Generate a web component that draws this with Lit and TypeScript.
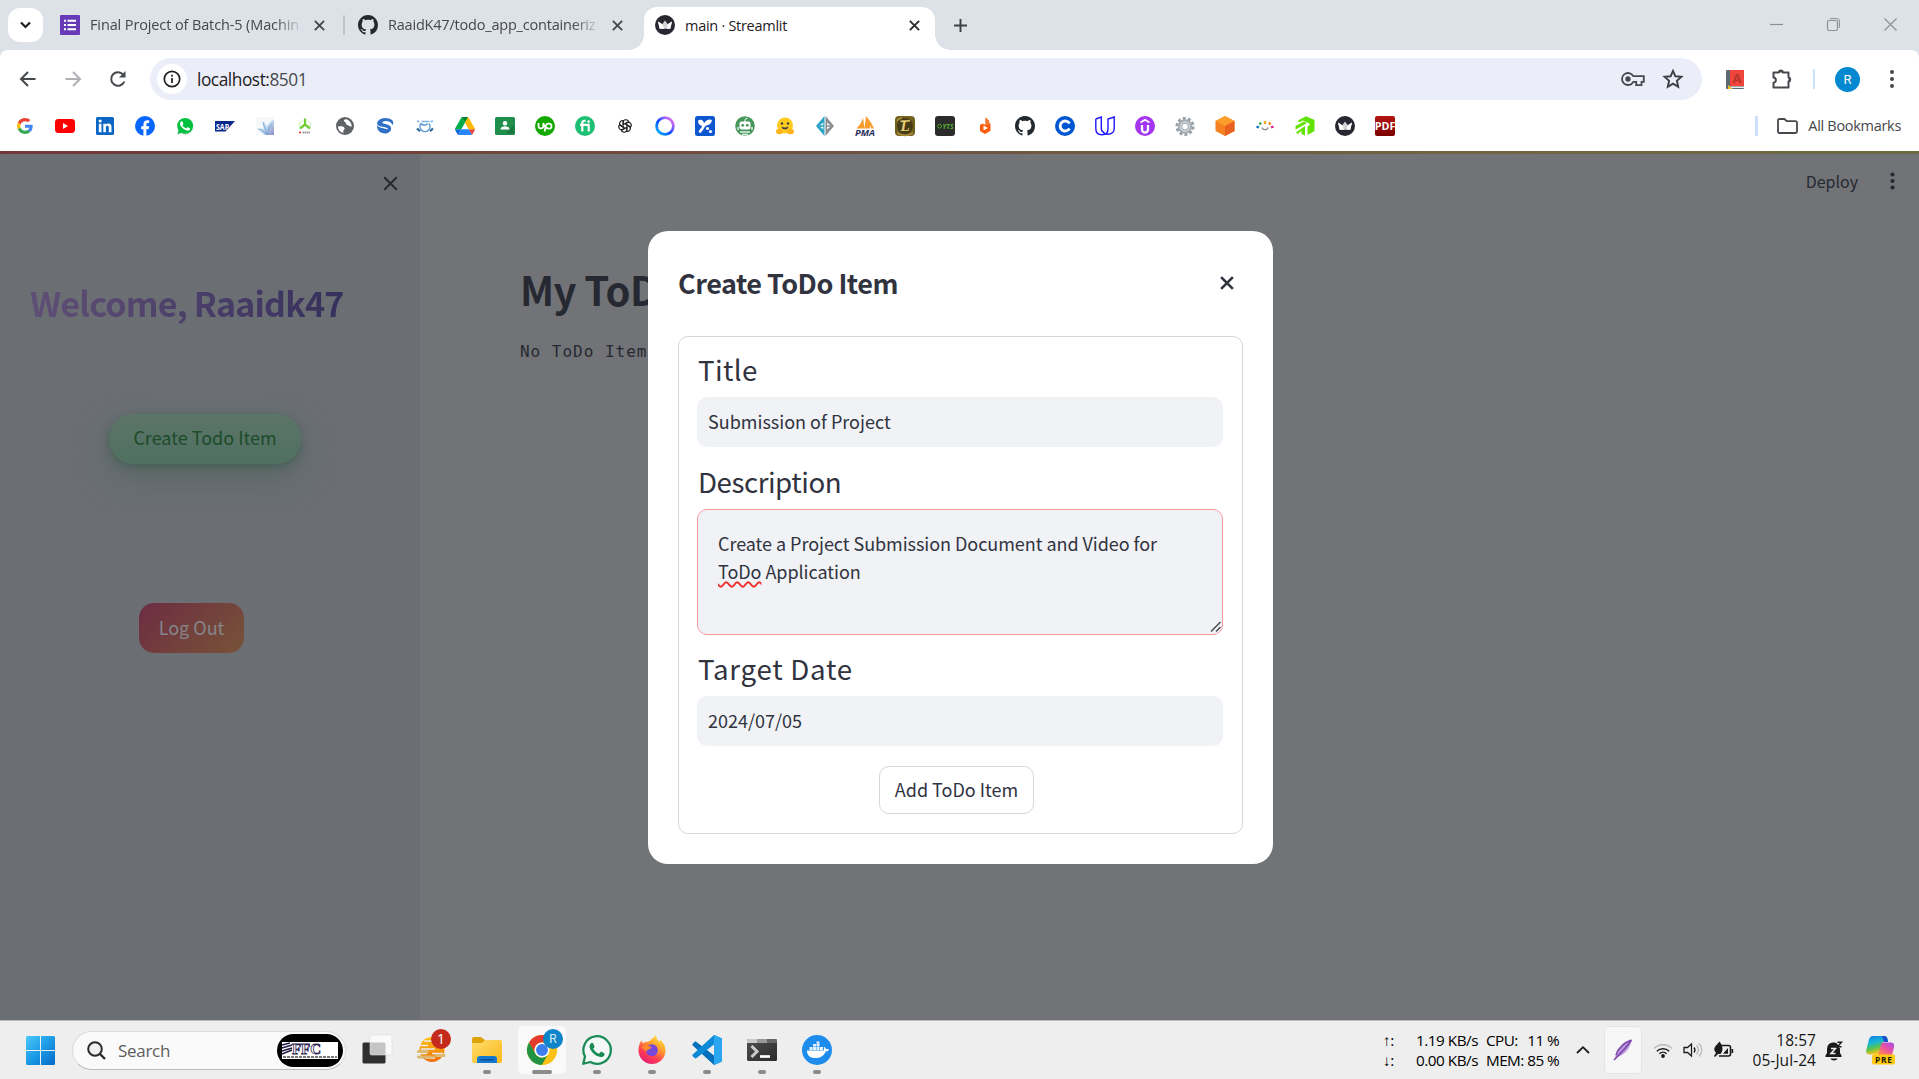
import { LitElement, html, css } from "lit";
import { customElement } from "lit/decorators.js";

const githubMark =
  "M8 0C3.58 0 0 3.58 0 8c0 3.54 2.29 6.53 5.47 7.59.4.07.55-.17.55-.38 0-.19-.01-.82-.01-1.49-2.01.37-2.53-.49-2.69-.94-.09-.23-.48-.94-.82-1.13-.28-.15-.68-.52-.01-.53.63-.01 1.08.58 1.23.82.72 1.21 1.87.87 2.33.66.07-.52.28-.87.51-1.07-1.78-.2-3.64-.89-3.64-3.95 0-.87.31-1.59.82-2.15-.08-.2-.36-1.02.08-2.12 0 0 .67-.21 2.2.82.64-.18 1.32-.27 2-.27.68 0 1.36.09 2 .27 1.53-1.04 2.2-.82 2.2-.82.44 1.1.16 1.92.08 2.12.51.56.82 1.27.82 2.15 0 3.07-1.87 3.75-3.65 3.95.29.25.54.73.54 1.48 0 1.07-.01 1.93-.01 2.2 0 .21.15.46.55.38A8.01 8.01 0 0 0 16 8c0-4.42-3.58-8-8-8z";

const whatsappPhone =
  "M17.472 14.382c-.297-.149-1.758-.867-2.03-.967-.273-.099-.471-.148-.67.15-.197.297-.767.966-.94 1.164-.173.199-.347.223-.644.075-.297-.15-1.255-.463-2.39-1.475-.883-.788-1.48-1.761-1.653-2.059-.173-.297-.018-.458.13-.606.134-.133.298-.347.446-.52.149-.174.198-.298.298-.497.099-.198.05-.371-.025-.52-.075-.149-.669-1.612-.916-2.207-.242-.579-.487-.5-.669-.51-.173-.008-.371-.01-.57-.01-.198 0-.52.074-.792.372-.272.297-1.04 1.016-1.04 2.479 0 1.462 1.065 2.875 1.213 3.074.149.198 2.096 3.2 5.077 4.487.709.306 1.262.489 1.694.625.712.227 1.36.195 1.871.118.571-.085 1.758-.719 2.006-1.413.248-.694.248-1.289.173-1.413-.074-.124-.272-.198-.57-.347z";

const github = html`<svg viewBox="0 0 16 16" width="20" height="20"><path fill="#24292f" d=${githubMark} /></svg>`;

const streamlit = html`<svg viewBox="0 0 20 20" width="20" height="20">
  <circle cx="10" cy="10" r="10" fill="#262730" />
  <path d="M3 6.600l4.300 2.700L10 5.600l2.700 3.700L17 6.600l-1.700 7.200H4.700z" fill="#d4d4d6" />
  <path d="M3 6.600l4.300 2.700 2 4.500H4.700zM17 6.600l-4.300 2.700-1 4.500h3.600z" fill="#fff" />
</svg>`;

const bookmarks = [
  html`<svg viewBox="-6 -6 60 60"><path fill="#ea4335" d="M24 9.5c3.54 0 6.71 1.22 9.21 3.6l6.85-6.85C35.9 2.38 30.47 0 24 0 14.62 0 6.51 5.38 2.56 13.22l7.98 6.19C12.43 13.72 17.74 9.5 24 9.5z"/><path fill="#4285f4" d="M46.98 24.55c0-1.57-.15-3.09-.38-4.55H24v9.02h12.94c-.58 2.96-2.26 5.48-4.78 7.18l7.73 6c4.51-4.18 7.09-10.36 7.09-17.65z"/><path fill="#fbbc05" d="M10.53 28.59c-.48-1.45-.76-2.99-.76-4.59s.27-3.14.76-4.59l-7.98-6.19C.92 16.46 0 20.12 0 24s.92 7.54 2.56 10.78l7.97-6.19z"/><path fill="#34a853" d="M24 48c6.48 0 11.93-2.13 15.89-5.81l-7.73-6c-2.15 1.45-4.92 2.3-8.16 2.3-6.26 0-11.57-4.22-13.47-9.91l-7.98 6.19C6.51 42.62 14.62 48 24 48z"/></svg>`,
  html`<svg viewBox="0 0 20 20"><rect y="3" width="20" height="14" rx="3.4" fill="#f00"/><path d="M8 7v6l5-3z" fill="#fff"/></svg>`,
  html`<svg viewBox="0 0 20 20"><rect x="1" y="1" width="18" height="18" rx="1.5" fill="#0a66c2"/><rect x="3.8" y="7.8" width="2.7" height="8.4" fill="#fff"/><circle cx="5.15" cy="5" r="1.6" fill="#fff"/><path d="M8.3 7.8h2.6V9c.5-.9 1.4-1.4 2.6-1.4 2.3 0 3 1.5 3 3.7v4.9h-2.7v-4.4c0-1.1-.2-2-1.4-2s-1.5.9-1.5 2v4.4H8.3z" fill="#fff"/></svg>`,
  html`<svg viewBox="0 0 20 20"><circle cx="10" cy="10" r="10" fill="#0866ff"/><path d="M8.4 20v-6.8H6.2v-3h2.2V8.6c0-3.1 1.5-4.4 4.2-4.4.6 0 1.2.1 1.6.2v2.7h-1.3c-1.1 0-1.5.5-1.5 1.6v1.5h2.8l-.5 3h-2.3V20z" fill="#fff"/></svg>`,
  html`<svg viewBox="0 0 24 24"><path d="M2 23l1.5-5.6A10 10 0 1 1 7.4 21.4z" fill="#e3e3e3"/><circle cx="12.2" cy="11.8" r="9.5" fill="#00c040"/><path d="M3 21.5l1.5-5 3.5 3.5z" fill="#00c040"/><path fill="#fff" d=${whatsappPhone}/></svg>`,
  html`<svg viewBox="0 0 20 20"><path d="M0 5h20l-9.500 10.500H0z" fill="#07298c"/><text class="logo" x="1" y="13.500" font-size="8.500" font-weight="700" fill="#fff" textLength="13" lengthAdjust="spacingAndGlyphs">SAP</text></svg>`,
  html`<svg viewBox="0 0 20 20"><defs><linearGradient id="wing" x1="0" y1="0" x2="1" y2="1"><stop offset="0" stop-color="#f4fafd"/><stop offset=".5" stop-color="#bcd8ee"/><stop offset="1" stop-color="#8d8cc8"/></linearGradient></defs><rect x="1" y="1" width="18" height="18" fill="#f5f9fc"/><path d="M19 4c-4 1-6 4-7 7-1-3-2-5-4-6-.5 3 0 5 1 8-2-1-4-1-7 0 3 1 5 4 8 6h9z" fill="url(#wing)"/><path d="M17 8c-3 3-4 6-4 11M8 6c1 4 2 8 5 13M3 13c4 1 6 3 10 6" stroke="#6fa3d2" stroke-width=".8" fill="none"/></svg>`,
  html`<svg viewBox="0 0 20 20"><path d="M10 2.500v6.500M10 8.500l-5 4M10 8.500l5 4" stroke="#6fce35" stroke-width="2.300" fill="none"/><path d="M7 4.500a6 6 0 0 0-2.500 6M13 4.500a6 6 0 0 1 2.500 6" stroke="#c5eab1" fill="none"/><circle cx="5" cy="16.500" r="1.100" fill="#e33"/><path d="M7.500 16.500h7.500" stroke="#999" stroke-width="2" stroke-dasharray="1.500 .5"/></svg>`,
  html`<svg viewBox="0 0 20 20"><circle cx="10" cy="10" r="9" fill="#5f6368"/><path d="M11.500 3.200c-2.500 0-3.500 1.800-1.800 2.600 2 .9.500 2.900 2.800 3.200 1.500 0 1.500 2 4.300 1.500-.2-3.500-2.300-6.300-5.300-7.300zM3 10.500c2.500-.5 6-.3 6.500 1.500s-1.300 1.800-1.300 3.300.6 1 .6 1.700A7 7 0 0 1 3 10.500z" fill="#fff"/></svg>`,
  html`<svg viewBox="0 0 20 20"><path d="M17.500 4.500C13 1 6 1.500 3.500 4.500S2 9.500 6 10.500s8 1 6.500 3c-3-1.500-8-1-10.500-4.500-.5 6 5 9.500 10 8.200 5-1.200 5.500-6.700 1.500-8.200S6.500 7.500 7.500 6c3-1.500 8-1.500 10 3 1.500-1.500.5-3.500 0-4.500z" fill="#2f6fc6"/></svg>`,
  html`<svg viewBox="0 0 20 20"><path d="M6 7.500a5 5 0 1 0 8 0M6 7.500c1.500 2 4.500 2.500 6.500 0" fill="none" stroke="#5a9ad6" stroke-width="1.500"/><path d="M6.500 5.500h8M2 5l2.500.7M18 5l-2.500.7" stroke="#7db2e2" stroke-width="1.600"/><path d="M2 12.500l3 2.700M18 12.500l-3 2.700" stroke="#2c6795" stroke-width="2.200"/></svg>`,
  html`<svg viewBox="0 0 87.300 78"><path d="m6.600 66.850 3.850 6.650c.8 1.400 1.950 2.500 3.300 3.300l13.750-23.800h-27.500c0 1.550.4 3.100 1.200 4.500z" fill="#0066da"/><path d="m43.650 25-13.750-23.800c-1.350.8-2.500 1.900-3.300 3.300l-25.400 44a9.060 9.060 0 0 0 -1.200 4.500h27.500z" fill="#00ac47"/><path d="m73.550 76.800c1.350-.8 2.500-1.900 3.300-3.300l1.600-2.750 7.650-13.250c.8-1.400 1.200-2.950 1.200-4.500h-27.502l5.852 11.500z" fill="#ea4335"/><path d="m43.650 25 13.750-23.800c-1.350-.8-2.900-1.200-4.500-1.200h-18.500c-1.600 0-3.150.45-4.500 1.200z" fill="#00832d"/><path d="m59.800 53h-32.300l-13.750 23.800c1.350.8 2.900 1.200 4.500 1.200h50.800c1.600 0 3.150-.45 4.500-1.200z" fill="#2684fc"/><path d="m73.400 26.500-12.700-22c-.8-1.400-1.950-2.500-3.300-3.300l-13.750 23.800 16.150 28h27.450c0-1.550-.4-3.100-1.200-4.500z" fill="#ffba00"/></svg>`,
  html`<svg viewBox="0 0 20 20"><rect y="1" width="20" height="18" rx="1.500" fill="#1e8e4a"/><path d="M11 17.500h7.500V9z" fill="#19753d"/><circle cx="10" cy="7.200" r="2.200" fill="#fff"/><path d="M5.500 13.500c0-4.300 9-4.300 9 0z" fill="#fff"/></svg>`,
  html`<svg viewBox="0 0 20 20"><circle cx="10" cy="10" r="10" fill="#14a800"/><path d="M3.500 7v3a2.400 2.400 0 0 0 4.800 0V7c.8 2.500 2.200 5 3.800 5.400M9.600 15.500l1.400-6c.5-2.500 5.500-2.700 5.500.8 0 3-3.500 3-5.200 1" stroke="#fff" stroke-width="1.800" fill="none"/></svg>`,
  html`<svg viewBox="0 0 20 20"><circle cx="10" cy="10" r="10" fill="#1dbf73"/><path d="M7.300 15.500V7c0-1.800 1-2.500 3.300-2.200M5 8.800h8.700v6.700" stroke="#fff" stroke-width="2.200" fill="none"/><circle cx="13.600" cy="5.600" r="1.300" fill="#fff"/></svg>`,
  html`<svg viewBox="-11.500 -11.500 23 23"><g fill="none" stroke="#222" stroke-width="1.300">${[0, 60, 120, 180, 240, 300].map(
    (a) => html`<svg viewBox="-10 -10 20 20" x="-10" y="-10" width="20" height="20"><path transform="rotate(${a})" d="M-2.300 1.300V-4C-2.300-8 3.700-8.200 4.200-4.500L-.3-2.200"/></svg>`
  )}</g></svg>`,
  html`<svg viewBox="0 0 20 20"><defs><linearGradient id="meta" x1="0" y1="1" x2="1" y2="0"><stop offset="0" stop-color="#00c0ff"/><stop offset=".45" stop-color="#0b4dff"/><stop offset=".75" stop-color="#a565ff"/><stop offset="1" stop-color="#ff7dce"/></linearGradient></defs><circle cx="10" cy="10" r="8.400" fill="none" stroke="url(#meta)" stroke-width="2.800"/></svg>`,
  html`<svg viewBox="0 0 20 20"><rect width="20" height="20" rx="2.500" fill="#0e57cf"/><path d="M3 4.500c3-1.500 5.500-.5 6 3C11 4 14 2.500 17 4c-.5 3-2 5-5.500 5.500C9.500 10 9 13 6 16.500c-1 1.200-3-.5-2-2C5.500 12.500 7 11.500 7 10 4.500 9.500 3 7.500 3 4.500z" fill="#fff"/><circle cx="12.500" cy="12.500" r="1.600" fill="#fff"/><circle cx="15.500" cy="15.500" r="1.600" fill="#fff"/></svg>`,
  html`<svg viewBox="0 0 20 20"><circle cx="10" cy="10" r="9.800" fill="#46975a"/><path d="M10 6V3.500L12.500 2" stroke="#fff" fill="none"/><rect x="4.500" y="5.500" width="11" height="8" rx="2" fill="#fff"/><circle cx="7.700" cy="9.300" r="1.400" fill="#46975a"/><circle cx="12.300" cy="9.300" r="1.400" fill="#46975a"/><path d="M3 11v3M17 11v3M5 16h10M7 18.500h6" stroke="#e5f2e8" stroke-width="1.500"/></svg>`,
  html`<svg viewBox="0 0 20 20"><circle cx="10" cy="9.500" r="8" fill="#ffcb1f"/><ellipse cx="4.500" cy="15.500" rx="3.500" ry="2.800" fill="#ffb31a"/><ellipse cx="15.500" cy="15.500" rx="3.500" ry="2.800" fill="#ffb31a"/><circle cx="7" cy="7.500" r="1.200" fill="#3a3b45"/><circle cx="13" cy="7.500" r="1.200" fill="#3a3b45"/><path d="M6.500 10.500c2 1.200 5 1.200 7 0-.3 3.800-6.700 3.800-7 0z" fill="#3a3b45"/></svg>`,
  html`<svg viewBox="0 0 20 20"><path d="M9.500 0v20L1 10z" fill="#2aa4c4"/><path d="M10.500 0v20L19 10z" fill="#8a8c8e"/><path d="M8.300 6.500v2.700H5zM8.300 10.800v2.700L5 10.800zM12 6.500l3.500 2.700H12zM12 10.800h3.500L12 13.500z" fill="#f1f7f9"/></svg>`,
  html`<svg viewBox="0 0 20 20"><path d="M1.500 12.500C5 9 7 5.500 8 1.500l1.500 11zM9.500 12.500L11 0c3 3.500 6 7.500 8 12.500h-3l-.5-3-1 3z" fill="#f89c2d"/><text class="logo" x="0" y="19.500" font-size="8.500" font-weight="700" font-style="italic" fill="#2b3060" textLength="20" lengthAdjust="spacingAndGlyphs">PMA</text></svg>`,
  html`<svg viewBox="0 0 20 20"><rect width="20" height="20" rx="4" fill="#72601f"/><circle cx="10" cy="10" r="8" fill="#453c16"/><path d="M2 17c5 3 11 3 16 0M2 5c1-2 3-3 5-3" stroke="#a58a38" stroke-width="1.500" fill="none"/><text x="10" y="15" font-family="Liberation Serif, serif" font-size="15" font-weight="700" font-style="italic" fill="#e8cf76" text-anchor="middle">L</text><path d="M5.500 5.500c3-1.500 5 .5 9.500-1" stroke="#e8cf76" stroke-width="1.600" fill="none"/></svg>`,
  html`<svg viewBox="0 0 20 20"><rect width="20" height="20" rx="3" fill="#2c2c2c"/><circle cx="4.600" cy="10.200" r="1.900" fill="none" stroke="#50a52c"/><text class="logo" x="7.500" y="12.500" font-size="7" font-weight="700" font-style="italic" fill="#50b02c" textLength="11" lengthAdjust="spacingAndGlyphs">YTS</text></svg>`,
  html`<svg viewBox="0 0 20 20"><path d="M10.500 1.500L14 4.500V7l1.500.8v7L10 18l-5-3V9l2.500-1.500L10.500 9z" fill="#ff5a0a"/><path d="M10.500 1.500V9h4V6z" fill="#f57a35"/><path d="M8.500 9.500v5l4.500-2.500z" fill="#fff"/></svg>`,
  github,
  html`<svg viewBox="0 0 20 20"><circle cx="10" cy="10" r="10" fill="#0056d2"/><path d="M14.500 7.500A5 5 0 1 0 14.500 12.500" fill="none" stroke="#fff" stroke-width="2.900"/></svg>`,
  html`<svg viewBox="0 0 20 20"><path d="M.8 3L6.300 1v11.500c0 2.500 1.500 3.500 3 4M.8 3v9.500c0 4 2.500 6.300 6.200 6.300 3.800 0 6-2.300 6-5.800V3l6.200-2v11.500c0 3.800-2.500 5.500-6 5.700-2.700 0-5.200-1-5.900-3.200" fill="none" stroke="#2015ff" stroke-width="1.400"/></svg>`,
  html`<svg viewBox="0 0 20 20"><circle cx="10" cy="10" r="10" fill="#a435f0"/><path d="M5.500 6.500L10 3.800l4.500 2.700" stroke="#fff" stroke-width="1.800" fill="none"/><path d="M7 9v4.500a3 3 0 0 0 6 0V9" stroke="#fff" stroke-width="2.300" fill="none"/></svg>`,
  html`<svg viewBox="0 0 20 20"><circle cx="10" cy="10.500" r="8" fill="none" stroke="#96a0a6" stroke-width="3" stroke-dasharray="3 2.030"/><circle cx="10" cy="10.500" r="5" fill="none" stroke="#a3adb3" stroke-width="4.500"/><circle cx="10" cy="10.500" r="4.500" fill="none" stroke="#ced6da" stroke-width="1.500"/></svg>`,
  html`<svg viewBox="0 0 20 20"><path d="M10 0l9.500 5v10L10 20 .5 15V5z" fill="#f58220"/><path d="M10 0l9.500 5-9.500 5L.5 5z" fill="#fc9e2c"/><path d="M10 10l9.500-5v10L10 20z" fill="#ea601e"/></svg>`,
  html`<svg viewBox="0 0 20 20"><g stroke-width="2.400"><path d="M1.500 10.500l2.500 1" stroke="#0a7cc4"/><path d="M4.500 6.500L6 8.500" stroke="#35b34a"/><path d="M10 5v3" stroke="#f6a51c"/><path d="M15.500 6.500L14 8.500" stroke="#f5821f"/><path d="M18.500 10.500l-2.500 1" stroke="#d9268f"/></g><path d="M7 11.500c1 3 5 3 6 0" fill="none" stroke="#777" stroke-width="1.100"/></svg>`,
  html`<svg viewBox="0 0 20 20"><g fill="#62e200"><path d="M3 4.500L11 .3 19.500 4v11L12.500 19V10.500l2-1.300V7.500L12.500 6.500 8 4.500 4 6.500z"/><path d="M.5 10L9 5.500l3 1.500-6 3.500L.5 13.500z"/><path d="M1 16.500L10 10v9.500L6.500 18v-3L3.500 17v1.500z"/></g></svg>`,
  streamlit,
  html`<svg viewBox="0 0 20 20"><defs><linearGradient id="pdf" x2="0" y2="1"><stop stop-color="#b51512"/><stop offset="1" stop-color="#7a0000"/></linearGradient></defs><rect width="20" height="20" rx="2" fill="url(#pdf)"/><text class="logo" x="-.3" y="13.800" font-size="10" font-weight="700" fill="#fff" textLength="20.600" lengthAdjust="spacingAndGlyphs">PDF</text></svg>`,
];

const cross = (size: number, weight: number, colour: string) => html`<svg width=${size} height=${size} viewBox="0 0 10 10">
  <path d="M.8.8l8.400 8.400M9.200.8L.8 9.200" fill="none" stroke=${colour} stroke-width=${weight} />
</svg>`;

@customElement("browser-header")
export class BrowserHeader extends LitElement {
  static styles = css`
    :host { display: block; height: 151px; background: #fff; font-family: "Open Sans", "Noto Sans", sans-serif; color: #45484c; }
    svg { display: block; overflow: visible; }
    .logo { font-family: "Open Sans", sans-serif; }
    .strip { height: 50px; box-sizing: border-box; background: #dde1e8; display: flex; padding-left: 8px; }
    .menu { width: 35px; height: 34px; margin-top: 8px; border-radius: 12px; background: #fff; display: flex; align-items: center; justify-content: center; }
    .tab { height: 50px; display: flex; align-items: center; white-space: nowrap; font-size: 14.500px; }
    .fav { width: 20px; height: 20px; margin-right: 10px; flex: none; }
    .name { width: 209px; overflow: hidden; line-height: 24px; mask-image: linear-gradient(90deg, #000 185px, transparent 213px); -webkit-mask-image: linear-gradient(90deg, #000 185px, transparent 213px); margin-right: 15px; }
    .one { margin-left: 17px; width: 283px; letter-spacing: -0.120px; }
    .two { width: 299px; padding-left: 13px; box-sizing: border-box; letter-spacing: -0.200px; }
    .split { width: 2px; height: 20px; background: #c3c5ca; align-self: center; border-radius: 1px; }
    .active { width: 291px; height: 43px; margin-top: 7px; padding: 0 15px 7px 11px; box-sizing: border-box; border-radius: 13px 13px 0 0; background: #fff; position: relative; color: #1f2023; justify-content: space-between; letter-spacing: -0.280px; }
    .active::before, .active::after { content: ""; position: absolute; bottom: 0; width: 15px; height: 15px; }
    .active::before { left: -15px; background: radial-gradient(circle at 0 0, transparent 14.500px, #fff 15px); }
    .active::after { right: -15px; background: radial-gradient(circle at 100% 0, transparent 14.500px, #fff 15px); }
    .lead { display: flex; align-items: center; }
    .plus { margin: 19px 0 0 19px; }
    .controls { margin-left: auto; display: flex; gap: 44px; padding: 18px 22px 0 0; }
    .bar { height: 58px; box-sizing: border-box; padding-top: 8px; display: flex; align-items: flex-start; background: #fff; border-radius: 8px 8px 0 0; }
    .under { background: #dde1e8; }
    .nav { display: flex; width: 150px; height: 42px; align-items: center; padding-left: 18px; gap: 25px; box-sizing: border-box; flex: none; }
    .omni { width: 1552px; height: 42px; border-radius: 21px; background: #ebeef8; display: flex; align-items: center; padding: 0 19px 0 7px; box-sizing: border-box; flex: none; }
    .info { width: 30px; height: 30px; border-radius: 50%; background: #fff; display: flex; align-items: center; justify-content: center; margin-right: 10px; }
    .url { font-size: 17.300px; letter-spacing: -0.450px; color: #46494d; flex: 1; }
    .host { color: #1f2023; }
    .right { display: flex; gap: 18px; align-items: center; }
    .ext { display: flex; align-items: center; height: 42px; padding-left: 23px; }
    .puzzle { margin-left: 26px; }
    .rule { width: 2px; height: 20px; background: #cfe0fc; margin: 0 20px; }
    .avatar { width: 25px; height: 25px; border-radius: 50%; background: #0288d1; color: #fff; font: 13px/25px "Roboto", sans-serif; text-align: center; margin-right: 30px; flex: none; }
    .marks { height: 35px; padding: 0 18px 0 15px; display: flex; align-items: center; gap: 20px; }
    .mark { width: 20px; height: 20px; flex: none; }
    .mark svg { width: 20px; height: 20px; }
    .all { margin-left: auto; display: flex; align-items: center; font-size: 14.500px; letter-spacing: -0.300px; color: #45484c; }
    .all .rule { width: 3px; margin: 0 19px 0 0; }
    .all svg { margin-right: 10px; }
  `;

  render() {
    return html`
      <div class="strip">
        <div class="menu"><svg width="11" height="8" viewBox="0 0 11 8"><path d="M1 1.500l4.500 4.500L10 1.500" fill="none" stroke="#1f1f1f" stroke-width="2.200" /></svg></div>
        <div class="tab one">
          <svg class="fav" viewBox="0 0 20 20"><rect width="20" height="20" rx="1" fill="#673ab7" /><path d="M4 5.800h2M4 10h2M4 14.200h2M7.500 5.800H16M7.500 10H16M7.500 14.200H16" stroke="#fff" stroke-width="2" /></svg>
          <div class="name">Final Project of Batch-5 (Machin</div>
          ${cross(11, 1.7, "#45484c")}
        </div>
        <div class="split"></div>
        <div class="tab two">
          <div class="fav">${github}</div>
          <div class="name">RaaidK47/todo_app_containeriz</div>
          ${cross(11, 1.7, "#45484c")}
        </div>
        <div class="tab active">
          <div class="lead"><div class="fav">${streamlit}</div>main · Streamlit</div>
          ${cross(11, 1.9, "#303236")}
        </div>
        <svg class="plus" width="13" height="13" viewBox="0 0 13 13"><path d="M6.500 0v13M0 6.500h13" stroke="#3c4043" stroke-width="1.900" /></svg>
        <div class="controls">
          <svg width="13" height="13" viewBox="0 0 13 13"><path d="M0 6.500h13" stroke="#8c9095" stroke-width="1.200" /></svg>
          <svg width="13" height="13" viewBox="0 0 13 13"><path d="M3 .6h7a2.400 2.400 0 0 1 2.400 2.400v7" fill="none" stroke="#8c9095" /><rect x=".5" y="2.500" width="10" height="10" rx="1.500" fill="none" stroke="#8c9095" stroke-width="1.200" /></svg>
          <svg width="13" height="13" viewBox="0 0 13 13"><path d="M.5.5l12 12M12.500.5l-12 12" stroke="#8c9095" stroke-width="1.200" /></svg>
        </div>
      </div>
      <div class="under">
        <div class="bar">
          <div class="nav">
            <svg width="20" height="20" viewBox="0 0 20 20"><path d="M17.500 10H3M10 3l-7 7 7 7" fill="none" stroke="#45484c" stroke-width="2" /></svg>
            <svg width="20" height="20" viewBox="0 0 20 20"><path d="M2.500 10H17M10 3l7 7-7 7" fill="none" stroke="#aeb0b3" stroke-width="2" /></svg>
            <svg width="20" height="20" viewBox="0 0 20 20"><path d="M16.300 12.500A6.800 6.800 0 1 1 15.500 6" fill="none" stroke="#45484c" stroke-width="2" /><path d="M17.500 2v6.500H11z" fill="#45484c" /></svg>
          </div>
          <div class="omni">
            <div class="info"><svg width="18" height="18" viewBox="0 0 18 18"><circle cx="9" cy="9" r="7.700" fill="none" stroke="#1f2023" stroke-width="1.700" /><path d="M9 8v5M9 4.800v1.900" stroke="#1f2023" stroke-width="1.700" /></svg></div>
            <div class="url"><span class="host">localhost:</span>8501</div>
            <div class="right">
              <svg width="24" height="16" viewBox="0 0 24 16"><path d="M12.300 5.200a6 6 0 1 0 0 5.600h2.900v3.300h5.300v-3.300h2.300V5.200z" fill="none" stroke="#45484c" stroke-width="1.800" /><circle cx="7" cy="8" r="2.700" fill="#45484c" /></svg>
              <svg width="20" height="20" viewBox="0 0 20 20"><path d="M10 1.800l2.400 5.500 6 .5-4.500 4 1.300 5.900L10 14.600l-5.200 3.100 1.300-5.900-4.500-4 6-.5z" fill="none" stroke="#3c4043" stroke-width="1.900" /></svg>
            </div>
          </div>
          <div class="ext">
            <svg width="20" height="21" viewBox="0 0 20 21"><rect x="1" y="1" width="18" height="19" rx="1" fill="#5c6b73" /><rect x="5" y="1" width="14" height="16" fill="#f0453a" /><path d="M5 17.500h14v1.500H5z" fill="#e8eaed" /><path d="M3 16l5 4H3z" fill="#fbc02d" /><text class="logo" x="12" y="14" font-size="13" font-weight="700" fill="#b7332b" text-anchor="middle">A</text></svg>
            <svg class="puzzle" width="22" height="22" viewBox="0 0 22 22"><path d="M2.500 4.500h5.300a2 2 0 0 1 4 0h5.700V9.300a2.200 2.200 0 0 1 0 4.300v5.900h-15v-4.700c3.200-.4 3.200-5 0-5.300z" fill="none" stroke="#45484c" stroke-width="2" stroke-linejoin="round" /><path d="M7.800 4.500a2 2 0 0 1 4 0zM17.500 9.300a2.200 2.200 0 0 1 0 4.300z" fill="#45484c" /></svg>
            <div class="rule"></div>
            <div class="avatar">R</div>
            <svg width="5" height="20" viewBox="0 0 5 20"><g fill="#45484c"><circle cx="2" cy="3" r="2" /><circle cx="2" cy="10" r="2" /><circle cx="2" cy="17" r="2" /></g></svg>
          </div>
        </div>
      </div>
      <div class="marks">
        ${bookmarks.map((b) => html`<div class="mark">${b}</div>`)}
        <div class="all">
          <div class="rule"></div>
          <svg width="21" height="16" viewBox="0 0 21 16"><path d="M1 2.500A1.500 1.500 0 0 1 2.500 1h5l2.200 2.200h8.800A1.500 1.500 0 0 1 20 4.700v8.800a1.500 1.500 0 0 1-1.500 1.500h-16A1.500 1.500 0 0 1 1 13.500z" fill="none" stroke="#45484c" stroke-width="1.800" /></svg>
          All Bookmarks
        </div>
      </div>
    `;
  }
}

@customElement("todo-dialog")
export class TodoDialog extends LitElement {
  static styles = css`
    :host { display: block; width: 625px; height: 633px; box-sizing: border-box; padding: 0 30px; background: #fff; border-radius: 20px; color: #31333f; font-family: "Noto Sans CJK JP", "Open Sans", sans-serif; }
    svg { display: block; }
    .head { height: 105px; display: flex; align-items: center; justify-content: space-between; padding-right: 9px; box-sizing: border-box; padding-bottom: 1px; }
    .title { font-size: 27px; font-weight: 600; line-height: 36px; letter-spacing: -0.500px; }
    .form { height: 498px; box-sizing: border-box; border: 1px solid #d6d6d9; border-radius: 10px; padding: 11px 19px 0 18px; display: flex; flex-direction: column; }
    .label { font-size: 27.700px; line-height: 43px; padding-left: 1px; height: 49px; box-sizing: border-box; letter-spacing: 0.400px; }
    .label.tight { letter-spacing: -0.450px; }
    .label.wide { letter-spacing: 0.720px; }
    .field { height: 50px; box-sizing: border-box; border-radius: 10px; background: #f0f2f6; font-size: 18px; line-height: 49px; padding-left: 11px; margin-bottom: 13px; }
    .area { height: 126px; box-sizing: border-box; border: 1px solid #ff9a9d; border-radius: 10px; background: #f0f2f6; font-size: 18px; line-height: 28px; letter-spacing: -0.050px; padding: 19px 20px 0; margin-bottom: 12px; position: relative; }
    .spell { text-decoration: underline wavy #f02d2d 1.500px; text-underline-offset: 2px; }
    .grip { position: absolute; right: 1px; bottom: 2px; }
    .add { align-self: center; margin: 7px 7px 0 0; width: 155px; height: 48px; box-sizing: border-box; border: 1px solid #d6d6d9; border-radius: 10px; background: #fff; font-size: 18px; line-height: 45px; text-align: center; }
  `;

  render() {
    return html`
      <div class="head"><div class="title">Create ToDo Item</div>${cross(14, 1.9, "#31333f")}</div>
      <div class="form">
        <div class="label">Title</div>
        <div class="field">Submission of Project</div>
        <div class="label tight">Description</div>
        <div class="area">
          Create a Project Submission Document and Video for <span class="spell">ToDo</span> Application
          <svg class="grip" width="11" height="11" viewBox="0 0 11 11"><path d="M1 10.500L10.500 1M6 10.500L10.500 6" stroke="#45464d" stroke-width="1.400" /></svg>
        </div>
        <div class="label wide">Target Date</div>
        <div class="field">2024/07/05</div>
        <div class="add">Add ToDo Item</div>
      </div>
    `;
  }
}

@customElement("page-view")
export class PageView extends LitElement {
  static styles = css`
    :host { display: flex; height: 869px; position: relative; background: #727377; font-family: "Noto Sans CJK JP", "Open Sans", sans-serif; color: #262932; }
    svg { display: block; }
    .stripe { position: absolute; left: 0; top: 0; width: 100%; height: 3px; background: linear-gradient(90deg, #733737, #6f6444 75%, #6d693f); }
    .side { width: 420px; height: 869px; box-sizing: border-box; background: #6b6f74; display: flex; flex-direction: column; padding: 25px 22px 0 30px; }
    .close { align-self: flex-end; }
    .hello { align-self: flex-start; margin-top: 85px; font-size: 34px; line-height: 54px; font-weight: 600; letter-spacing: -0.800px; white-space: nowrap; background: linear-gradient(90deg, #604f76, #37305c); -webkit-background-clip: text; background-clip: text; color: transparent; }
    .create { margin: 84px 0 0 79px; width: 192px; height: 50px; border-radius: 25px; background: linear-gradient(#5c7569, #4f7060); box-shadow: 0 3px 8px rgba(60, 92, 76, 0.7), 0 14px 34px rgba(84, 98, 96, 0.7); color: #1c4b29; font-size: 18px; line-height: 47px; text-align: center; }
    .logout { margin: 139px 0 0 109px; width: 105px; height: 50px; border-radius: 15px; background: linear-gradient(135deg, #6c2c43, #73403c 50%, #775339); color: #85868b; font-size: 18px; line-height: 48px; text-align: center; }
    .main { flex: 1; padding: 0 24px 0 100px; }
    .top { display: flex; justify-content: flex-end; align-items: center; height: 59px; font-size: 16px; }
    .top svg { margin-left: 32px; }
    h1 { margin: 49px 0 0; font-size: 40px; line-height: 60px; font-weight: 600; letter-spacing: -0.600px; }
    .empty { margin-top: 21px; font: 16px/24px "DejaVu Sans Mono", monospace; letter-spacing: 0.980px; }
    todo-dialog { position: absolute; left: 648px; top: 80px; }
  `;

  render() {
    return html`
      <div class="side">
        <div class="close">${cross(15, 1.3, "#262932")}</div>
        <div class="hello">Welcome, Raaidk47</div>
        <div class="create">Create Todo Item</div>
        <div class="logout">Log Out</div>
      </div>
      <div class="main">
        <div class="top">Deploy<svg width="5" height="18" viewBox="0 0 5 18"><g fill="#262932"><circle cx="2.500" cy="2.500" r="2.100" /><circle cx="2.500" cy="9" r="2.100" /><circle cx="2.500" cy="15.500" r="2.100" /></g></svg></div>
        <h1>My ToDo</h1>
        <div class="empty">No ToDo Items</div>
      </div>
      <div class="stripe"></div>
      <todo-dialog></todo-dialog>
    `;
  }
}

const explorer = html`<svg viewBox="0 0 30 30"><path d="M0 4a2 2 0 0 1 2-2h7l4 3v5H0z" fill="#dca30c" /><path d="M0 8h10l3-3h15a2 2 0 0 1 2 2v19a2 2 0 0 1-2 2H2a2 2 0 0 1-2-2z" fill="url(#fold)" /><defs><linearGradient id="fold" x2="1" y2="1"><stop stop-color="#ffdd6b" /><stop offset="1" stop-color="#fbb81c" /></linearGradient></defs><path d="M5 28v-4a3 3 0 0 1 3-3h14a3 3 0 0 1 3 3v4z" fill="#1279cf" /><path d="M8.500 24.800h13" stroke="#0b4d91" stroke-width="1.500" /></svg>`;

const chrome = html`<svg viewBox="0 0 48 48"><circle cx="24" cy="24" r="24" fill="#fbc116" /><path d="M3.200 12A24 24 0 0 1 44.800 12H24A12 12 0 0 0 13.600 30z" fill="#e33b2e" /><path d="M3.200 12A24 24 0 0 0 24 48l10.400-18A12 12 0 0 1 13.600 30z" fill="#229342" /><path d="M24 48A24 24 0 0 0 44.800 12H24a12 12 0 0 1 10.400 18z" fill="#fbc116" /><circle cx="24" cy="24" r="12" fill="#fff" /><circle cx="24" cy="24" r="9.500" fill="#3b7ded" /></svg>`;

const whatsapp = html`<svg viewBox="0 0 24 24"><path d="M1 23l1.400-5.800a11 11 0 1 1 4.300 4.400z" fill="#f4f8f6" stroke="#1a8a57" stroke-width="1.800" stroke-linejoin="round" /><path d=${whatsappPhone} fill="#1a8a57" /></svg>`;

const firefox = html`<svg viewBox="0 0 30 30"><defs><linearGradient id="fox" x1=".85" y1=".05" x2=".3" y2="1"><stop stop-color="#ffe74a" /><stop offset=".35" stop-color="#ffa32a" /><stop offset=".7" stop-color="#ff3f52" /><stop offset="1" stop-color="#e41d77" /></linearGradient></defs><path d="M19 0c0 3 1.500 4.500 3 6.500 1-.3 1.200-1 1-1.700 4 3 5.500 7 5.500 10.700A13.500 13.500 0 0 1 15 29 13.500 13.500 0 0 1 1.500 15.500C1.500 11 2.500 8 4.500 5.500L6 8.500c1.500-1.500 3-2 5-1.700C12.500 6.500 15.500 3.500 19 0z" fill="url(#fox)" /><circle cx="15" cy="15.200" r="6" fill="#7848d8" /><path d="M15 9.200a6 6 0 0 1 4.500 10c2.500-.6 3.300-3 2.500-5-1.200-3-4-5.500-7-5z" fill="#ffa436" /><path d="M4.500 12.500c3-3 6-2 8.500-1 1.500.3 2 .8.500 2-1.700 1-4 1.200-4 3-2-1-3-3-5-4z" fill="#ff8a2b" /></svg>`;

const vscode = html`<svg viewBox="0 0 30 30"><path d="M22 0l8 3.500v23L22 30 1 10.800c-.8-.8-.8-1.500 0-2.300L2.500 7c.7-.6 1.300-.6 2 0L22 20.500z" fill="#0070bd" /><path d="M22 0L1 19.200c-.8.8-.8 1.500 0 2.300L2.500 23c.7.6 1.300.6 2 0L22 9.500z" fill="#0d8ad5" /><path d="M22 0l8 3.500v23L22 30z" fill="#2aa7f0" /></svg>`;

const terminal = html`<svg viewBox="0 0 30 30"><defs><linearGradient id="term" x2="1" y2="1"><stop stop-color="#4e4e4e" /><stop offset="1" stop-color="#2c2c2c" /></linearGradient></defs><rect y="4" width="30" height="22" rx="1.500" fill="url(#term)" /><path d="M0 8V5.500A1.500 1.500 0 0 1 1.500 4H10v4z" fill="#c9c9c9" /><path d="M10 4h10v4H10z" fill="#999" /><path d="M20 4h8.500A1.500 1.500 0 0 1 30 5.500V8H20z" fill="#666" /><path d="M4.500 11l5.500 5.500L4.500 22" fill="none" stroke="#ccc" stroke-width="3" /><path d="M13 21.500h10" stroke="#fff" stroke-width="2.700" /></svg>`;

const docker = html`<svg viewBox="0 0 30 30"><circle cx="15" cy="15" r="15" fill="#1d8cec" /><path d="M5 15.500h16.500c.8-.8.8-2.300.3-3.300.6-.5 1.700.3 2.200 1.700 1 0 2.200 0 3 .6-.6 1.500-2 1.900-3.300 1.900C22 21 18 23 13.500 23 8 23 5 20.500 5 15.500z" fill="#fff" /><path d="M7.500 12h3v3h-3zM11 12h3v3h-3zM14.500 12h3v3h-3zM18 12h3v3h-3zM11 9h3v2.600h-3zM14.500 9h3v2.600h-3zM14.500 6.500h3v2.200h-3z" fill="#e6f3ff" /></svg>`;

@customElement("task-bar")
export class TaskBar extends LitElement {
  static styles = css`
    :host { display: flex; height: 59px; box-sizing: border-box; border-top: 1px solid #bcbcbe; background: #eee; padding: 0 24px 0 26px; font-family: "Open Sans", "Noto Sans", sans-serif; color: #161616; align-items: center; }
    svg { display: block; overflow: visible; }
    .search { margin-left: 17px; width: 274px; height: 39px; box-sizing: border-box; border: 1px solid #dcdcdc; border-bottom-color: #bdbdbd; border-radius: 20px; background: #fafafa; display: flex; align-items: center; padding: 0 2px 0 14px; }
    .hint { flex: 1; padding-left: 12px; font-size: 17px; letter-spacing: -0.300px; color: #5d5d5d; }
    .ffc { width: 66px; height: 33px; border-radius: 17px; background: #000; }
    .item { width: 55px; height: 58px; display: flex; flex-direction: column; align-items: center; position: relative; }
    .item svg { width: 30px; height: 30px; margin-top: 14px; }
    .item::after { content: ""; position: absolute; bottom: 5px; width: 8px; height: 4px; border-radius: 2px; background: #8b8b8b; }
    .item.plain::after { content: none; }
    .item.on::before { content: ""; position: absolute; top: 5px; width: 48px; height: 48px; border-radius: 5px; background: #f9f9f9; }
    .item.on::after { width: 20px; }
    .item.on svg { position: relative; }
    .badge { position: absolute; left: 27px; top: 8px; width: 20px; height: 20px; border-radius: 50%; background: #c42b1c; color: #fff; font-size: 14px; line-height: 20px; text-align: center; }
    .profile { left: 29px; background: #0e85c8; color: #d5ecfa; font-family: "Roboto", sans-serif; font-size: 12px; }
    .views { margin-left: 3px; }
    .tray { margin-left: auto; display: flex; align-items: center; height: 58px; }
    .meter { display: grid; grid-template-columns: 25px 70px 81px; line-height: 20px; font-size: 15.300px; letter-spacing: -0.480px; white-space: nowrap; color: #000; }
    .meter .rate { text-align: right; }
    .load { padding-left: 8px; display: flex; justify-content: space-between; letter-spacing: -0.600px; }
    .chev { margin: 0 14px 0 17px; }
    .quill { width: 38px; height: 48px; border: 1px solid #e3e3e3; box-sizing: border-box; border-radius: 5px; background: #f7f7f7; display: flex; align-items: center; justify-content: center; }
    .icons { display: flex; align-items: center; gap: 10px; margin-left: 11px; }
    .clock { text-align: right; font-size: 15.500px; line-height: 20px; letter-spacing: 0.050px; width: 82px; }
    .bell { margin: 2px 23px 0 9px; }
  `;

  render() {
    return html`
      <svg width="29" height="29" viewBox="0 0 29 29"><defs><linearGradient id="win" x2="1" y2="1"><stop stop-color="#4cc9fb" /><stop offset=".5" stop-color="#1b9ae6" /><stop offset="1" stop-color="#0669c8" /></linearGradient></defs><path d="M0 1.500Q0 0 1.500 0H14v14H0zM15 0h12.500Q29 0 29 1.500V14H15zM0 15h14v14H1.500Q0 29 0 27.500zM15 15h14v12.500q0 1.500-1.500 1.500H15z" fill="url(#win)" /></svg>
      <div class="search">
        <svg width="19" height="19" viewBox="0 0 19 19"><circle cx="8" cy="8" r="6.800" fill="#eef0f1" stroke="#2b2b2b" stroke-width="2" /><path d="M13 13l5 5" stroke="#2b2b2b" stroke-width="2.400" /></svg>
        <div class="hint">Search</div>
        <svg class="ffc" viewBox="0 0 66 33"><rect x="5" y="8" width="56" height="17" fill="#fff" /><path d="M5 11l8-2M5 14l10-3M5 17l10-3M5 20l10-4" stroke="#211b45" stroke-width="1.500" /><text x="15" y="20" font-family="Liberation Serif, serif" font-weight="700" font-size="15" fill="#fff" stroke="#2c244f" stroke-width=".8" textLength="29">FFC</text><path d="M6 23h54" stroke="#777" stroke-width="2" stroke-dasharray="3 1" /></svg>
      </div>
      <div class="item plain views"><svg viewBox="0 0 30 30"><rect x=".5" y="7.500" width="23" height="21" rx="1.500" fill="#2f2f2f" /><rect x="8" y="0" width="22" height="20" rx="1.500" fill="#fff" fill-opacity=".72" stroke="#dcdcdc" stroke-width=".6" /></svg></div>
      <div class="item plain">
        <svg viewBox="0 0 30 30"><defs><linearGradient id="sun" x2="0" y2="1"><stop stop-color="#ffc30a" /><stop offset="1" stop-color="#ef6c0e" /></linearGradient></defs><circle cx="15" cy="14.500" r="12.500" fill="url(#sun)" /><path d="M7 6h11M2 10.500h9M17 10h10M4 14h14M2 18.500h8M15 18.500h11M9 23h9" stroke="#eee" stroke-width="1.400" /><path d="M1.500 16.500h9M1.500 22h14M19 20.500h8" stroke="#dcb96f" stroke-width="3" stroke-linecap="round" /></svg>
        <span class="badge">1</span>
      </div>
      <div class="item">${explorer}</div>
      <div class="item on">${chrome}<span class="badge profile">R</span></div>
      <div class="item">${whatsapp}</div>
      <div class="item">${firefox}</div>
      <div class="item">${vscode}</div>
      <div class="item">${terminal}</div>
      <div class="item">${docker}</div>
      <div class="tray">
        <div class="meter">
          <span>↑:</span><span class="rate">1.19 KB/s</span><div class="load"><span>CPU:</span><span>11 %</span></div>
          <span>↓:</span><span class="rate">0.00 KB/s</span><div class="load"><span>MEM:</span><span>85 %</span></div>
        </div>
        <svg class="chev" width="14" height="8" viewBox="0 0 14 8"><path d="M1 7l6-5.800L13 7" fill="none" stroke="#1b1b1b" stroke-width="1.800" /></svg>
        <div class="quill"><svg width="20" height="22" viewBox="0 0 20 22"><path d="M18.500 1C12 3 4 9 2 18.500 9 17 17 12 18.500 1z" fill="#b79adb" /><path d="M18.500 1C14 8 8 14 1 21M18.500 1C12 3 5 9 3 16" fill="none" stroke="#7f44ab" stroke-width="1.500" /></svg></div>
        <div class="icons">
          <svg width="20" height="16" viewBox="0 0 20 16"><g fill="none" stroke-width="1.500"><path d="M1 6.500a12.800 12.800 0 0 1 18 0" stroke="#b9b9b9" /><path d="M3.800 9.200a8.900 8.900 0 0 1 12.400 0M6.400 11.800a5.200 5.200 0 0 1 7.200 0" stroke="#1b1b1b" /></g><circle cx="10" cy="14" r="1.900" fill="#1b1b1b" /></svg>
          <svg width="20" height="16" viewBox="0 0 20 16"><path d="M1 5.500h3.500L8.500 2v12L4.500 10.500H1z" fill="none" stroke="#1b1b1b" stroke-width="1.300" /><path d="M11 5.500c1.200 1.500 1.200 3.500 0 5" fill="none" stroke="#1b1b1b" stroke-width="1.300" /><path d="M13.500 3.500c2.500 2.700 2.500 6.300 0 9M16 1.500c3.700 4 3.700 9 0 13" fill="none" stroke="#b5b5b5" stroke-width="1.300" /></svg>
          <svg width="21" height="18" viewBox="0 0 21 18"><path d="M6 4.500h9.500a2 2 0 0 1 2 2V13a2 2 0 0 1-2 2H6" fill="none" stroke="#1b1b1b" stroke-width="1.600" /><path d="M18.500 8h1.700v4h-1.700z" fill="#1b1b1b" /><path d="M6.500.500c3 4 4.500 8.500 1 12.500H5l-3 3-1-1 2-3C-.8 7 2.500 5.500 6.500.500z" fill="#1b1b1b" /><path d="M15 7v5.700h-5z" fill="#1b1b1b" /></svg>
        </div>
        <div class="clock">18:57<br />05-Jul-24</div>
        <svg class="bell" width="18" height="20" viewBox="0 0 18 20"><path d="M.5 16v-1.500L2 12V8A6 6 0 0 1 8.500 1.500c3.500 0 6.500 2.500 6.500 6.500v4l1.500 2.500V16zM5.500 17.500h7c-.5 2.500-6.500 2.500-7 0z" fill="#1b1b1b" /><path d="M11.300 0H18v7h-4z" fill="#eee" /><path d="M6 7.500h4.500L6 12.500h4.500" fill="none" stroke="#eee" stroke-width="1.500" /><path d="M12.500 1.200h4l-4 4.500h4" fill="none" stroke="#1b1b1b" stroke-width="1.400" /></svg>
        <svg width="29" height="30" viewBox="0 0 29 30"><defs><linearGradient id="cp1" x2=".3" y2="1"><stop stop-color="#1877e8" /><stop offset=".4" stop-color="#15b5d8" /><stop offset=".7" stop-color="#5ac44e" /><stop offset="1" stop-color="#ffc31c" /></linearGradient><linearGradient id="cp2" x1="1" x2=".2" y2="1"><stop stop-color="#a04de8" /><stop offset=".5" stop-color="#e651a8" /><stop offset="1" stop-color="#ff8650" /></linearGradient></defs><path d="M7 1h11c2 0 3 1 3.500 3L22 7h-5l-4 12.500H4c-3 0-4.500-2-3.600-5L3 4.500C3.800 2 5 1 7 1z" fill="url(#cp1)" /><path d="M17.500 7.500h7c3 0 4.300 2 3.500 5L26 20H12l3-10c.4-1.500 1.200-2.500 2.500-2.500z" fill="url(#cp2)" /><path d="M16 1h2c2 0 3 1 3.500 3L22 7h-4z" fill="#1b50c8" /><rect x="6" y="19.500" width="23" height="10" rx="2" fill="#ffc914" /><text x="17.500" y="27.500" font-family="Open Sans, sans-serif" font-size="8.300" font-weight="700" text-anchor="middle" fill="#221b05" textLength="17">PRE</text></svg>
      </div>
    `;
  }
}

@customElement("app-root")
export class AppRoot extends LitElement {
  static styles = css`
    :host { display: flex; flex-direction: column; width: 1919px; height: 1079px; overflow: hidden; }
  `;

  render() {
    return html`<browser-header></browser-header><page-view></page-view><task-bar></task-bar>`;
  }
}
